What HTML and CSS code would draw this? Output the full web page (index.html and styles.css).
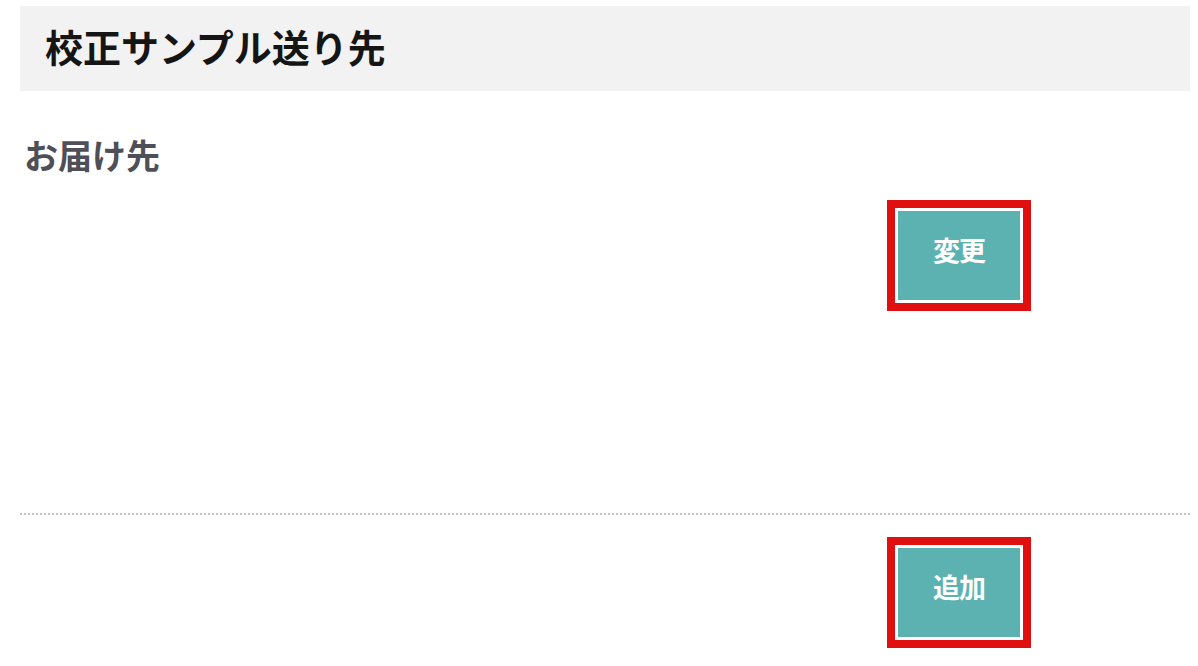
FILE: index.html
```html
<!DOCTYPE html>
<html lang="ja">
<head>
<meta charset="utf-8">
<title>校正サンプル送り先</title>
<link rel="stylesheet" href="styles.css">
</head>
<body>
<div class="page">
  <div class="header"><h1 class="title">校正サンプル送り先</h1></div>
  <div class="section">
    <h2 class="label">お届け先</h2>
    <div class="btn-row first">
      <div class="btn-frame"><button class="btn">変更</button></div>
    </div>
  </div>
  <div class="divider"></div>
  <div class="btn-row second">
    <div class="btn-frame"><button class="btn">追加</button></div>
  </div>
</div>
</body>
</html>
```
FILE: styles.css
```css
html, body {
  margin: 0;
  padding: 0;
  background: #ffffff;
}
body {
  font-family: "Noto Sans CJK JP", "Noto Sans", sans-serif;
  width: 1198px;
  height: 666px;
  overflow: hidden;
}
.page {
  padding: 6px 8px 0 20px;
}
.header {
  background: #f2f2f2;
  height: 85px;
  box-sizing: border-box;
  display: flex;
  align-items: center;
  padding: 0 0 6px 25px;
}
.title {
  margin: 0;
  font-size: 38px;
  font-weight: 700;
  color: #151515;
  line-height: 1;
}
.section {
  box-sizing: border-box;
  height: 422px;
  padding-top: 47px;
}
.label {
  margin: 0 0 0 4px;
  font-size: 34px;
  font-weight: 700;
  color: #4f4f57;
  line-height: 1;
}
.btn-row {
  display: flex;
  padding-left: 867px;
}
.btn-row.first {
  margin-top: 28px;
}
.btn-row.second {
  margin-top: 22px;
}
.btn-frame {
  border: 8px solid #e01010;
  padding: 3px;
  background: #ffffff;
}
.btn {
  display: flex;
  align-items: center;
  justify-content: center;
  width: 122px;
  height: 89px;
  border: 0;
  margin: 0;
  padding: 0 0 12px 0;
  background: #5cb2b1;
  color: #ffffff;
  font-family: "Noto Sans CJK JP", "Noto Sans", sans-serif;
  font-size: 27px;
  font-weight: 700;
  letter-spacing: -1px;
}
.divider {
  border-top: 2px dotted #c4c4c4;
}
```
